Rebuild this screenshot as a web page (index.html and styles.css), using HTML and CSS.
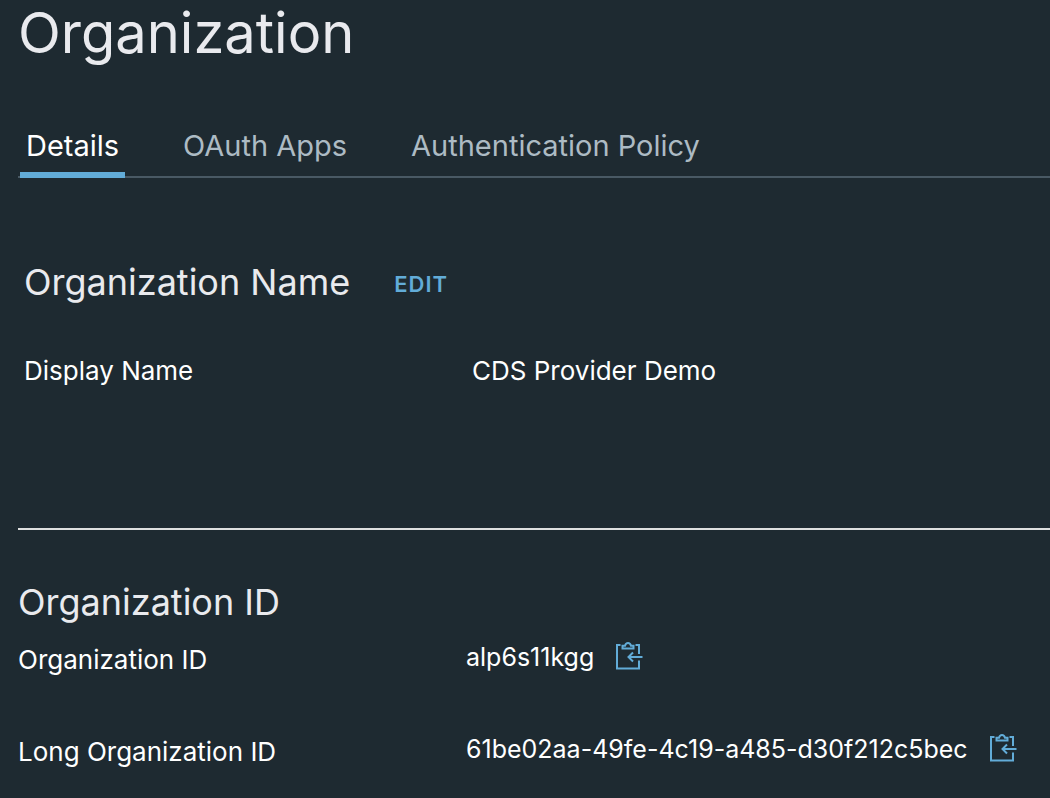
FILE: index.html
```html
<!DOCTYPE html>
<html lang="en">
<head>
<meta charset="utf-8">
<title>Organization</title>
<link rel="stylesheet" href="styles.css">
</head>
<body>
<svg class="sprite" aria-hidden="true">
  <symbol id="copy-in" viewBox="0 0 28 30">
    <path d="M4.500 3H1V26.500H23V18.500M19.500 3H23V12"/>
    <path d="M6.500 6.500V3.800H9C9.500 1.800 10.500 1 12 1S14.500 1.800 15 3.800H17.500V6.500Z"/>
    <path d="M26.500 15H13M17 10.500L12.500 15L17 19.500"/>
  </symbol>
</svg>
<main class="page">
  <h1 class="page-title">Organization</h1>
  <nav class="tabs" aria-label="Organization sections">
    <a class="tab tab-active" href="#details" aria-current="page">Details</a>
    <a class="tab" href="#oauth">OAuth Apps</a>
    <a class="tab" href="#policy">Authentication Policy</a>
  </nav>
  <section class="name-section" id="details">
    <div class="heading-row">
      <h2 class="section-title">Organization Name</h2>
      <button class="edit-button" type="button">EDIT</button>
    </div>
    <dl class="field display-field">
      <dt class="label">Display Name</dt>
      <dd class="value">CDS Provider Demo</dd>
    </dl>
  </section>
  <section class="id-section">
    <h2 class="section-title">Organization ID</h2>
    <dl class="fields">
      <div class="field">
        <dt class="label label-low">Organization ID</dt>
        <dd class="value value-id"><span>alp6s11kgg</span>
          <button class="copy-button" type="button" aria-label="Copy organization ID"><svg class="icon" aria-hidden="true"><use href="#copy-in"/></svg></button></dd>
      </div>
      <div class="field">
        <dt class="label label-low">Long Organization ID</dt>
        <dd class="value value-id"><span>61be02aa-49fe-4c19-a485-d30f212c5bec</span>
          <button class="copy-button" type="button" aria-label="Copy long organization ID"><svg class="icon" aria-hidden="true"><use href="#copy-in"/></svg></button></dd>
      </div>
    </dl>
  </section>
</main>
</body>
</html>
```
FILE: styles.css
```css
* { box-sizing: border-box; }
body {
  margin: 0;
  background: #1e2a31;
  color: #fff;
  font-family: Inter, "Liberation Sans", sans-serif;
  font-size: 26px;
  line-height: 30px;
}
h1, h2, dl, dd { margin: 0; }
button { border: 0; padding: 0; background: none; color: #62acd8; font-family: inherit; cursor: pointer; }
.sprite { display: none; }
.page { padding-left: 18px; }
.page-title {
  color: #e9eaee;
  font-size: 56px;
  font-weight: 400;
  line-height: 66px;
}
.tabs {
  display: flex;
  gap: 52px;
  margin-top: 62px;
  padding-left: 2px;
  box-shadow: inset 0 -2px #495964;
}
.tab {
  padding: 2px 6px 16px;
  color: #adbbc4;
  font-size: 29px;
  line-height: 32px;
  text-decoration: none;
}
.tab-active {
  color: #fff;
  box-shadow: inset 0 -6px #62acd8;
}
.name-section {
  padding: 84px 0 142px 6px;
  border-bottom: 2px solid #dedfdf;
}
.heading-row { display: flex; align-items: center; gap: 44px; }
.section-title {
  color: #e9eaee;
  font-size: 36px;
  font-weight: 400;
  line-height: 40px;
}
.edit-button {
  padding-top: 4px;
  font-size: 22px;
  font-weight: 600;
  line-height: 26px;
  letter-spacing: 1px;
}
.field {
  display: grid;
  grid-template-columns: 448px 1fr;
  align-items: start;
}
.display-field { margin-top: 54px; }
.value { display: flex; align-items: center; gap: 22px; }
.value-id { font-size: 25px; }
.id-section { padding-top: 52px; }
.fields { display: grid; gap: 56px; margin-top: 20px; }
.label-low { line-height: 36px; }
.copy-button { display: flex; }
.icon {
  width: 28px;
  height: 30px;
  fill: none;
  stroke: currentColor;
  stroke-width: 2;
}
```
